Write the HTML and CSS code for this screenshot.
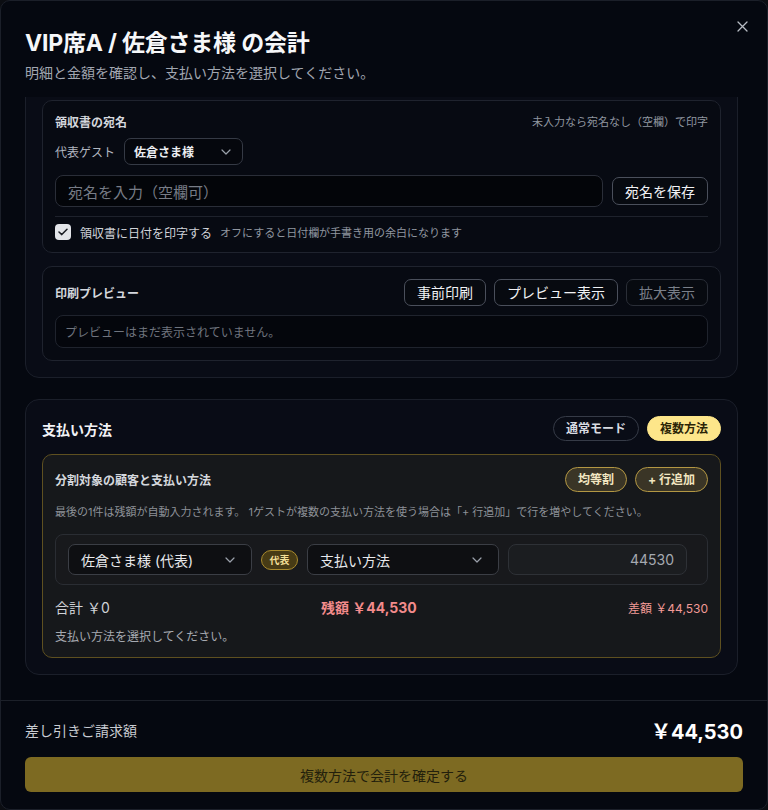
FILE: index.html
```html
<!DOCTYPE html>
<html lang="ja">
<head>
<meta charset="utf-8">
<title>会計</title>
<link rel="stylesheet" href="styles.css">
</head>
<body>
<div class="modal">
  <button class="close" aria-label="閉じる">
    <svg width="11" height="11" viewBox="0 0 11 11"><path d="M1 1L10 10M10 1L1 10" stroke="#b8bcc4" stroke-width="1.3" stroke-linecap="round"/></svg>
  </button>
  <header class="head">
    <h1 class="title">VIP席A / 佐倉さま様 の会計</h1>
    <p class="subtitle">明細と金額を確認し、支払い方法を選択してください。</p>
  </header>

  <div class="scroll">
    <section class="panel panel-top">
      <div class="card">
        <div class="row-between h18">
          <span class="card-title">領収書の宛名</span>
          <span class="note">未入力なら宛名なし（空欄）で印字</span>
        </div>
        <div class="guest-row">
          <span class="label">代表ゲスト</span>
          <div class="select select-sm">
            <span class="select-text bold">佐倉さま様</span>
            <svg class="chev" width="10" height="6" viewBox="0 0 10 6"><path d="M1 1L5 5L9 1" fill="none" stroke="#9aa0aa" stroke-width="1.2" stroke-linecap="round" stroke-linejoin="round"/></svg>
          </div>
        </div>
        <div class="name-row">
          <div class="input name-input"><span class="placeholder">宛名を入力（空欄可）</span></div>
          <button class="btn btn-save">宛名を保存</button>
        </div>
        <div class="divider"></div>
        <div class="check-row">
          <span class="checkbox">
            <svg width="10" height="8" viewBox="0 0 10 8"><path d="M1 4L3.8 6.6L9 1.2" fill="none" stroke="#1b1e24" stroke-width="1.5" stroke-linecap="round" stroke-linejoin="round"/></svg>
          </span>
          <span class="check-label">領収書に日付を印字する</span>
          <span class="note">オフにすると日付欄が手書き用の余白になります</span>
        </div>
      </div>

      <div class="card card-preview">
        <div class="row-between h27">
          <span class="card-title">印刷プレビュー</span>
          <div class="btn-group">
            <button class="btn">事前印刷</button>
            <button class="btn">プレビュー表示</button>
            <button class="btn btn-disabled">拡大表示</button>
          </div>
        </div>
        <div class="preview-box">プレビューはまだ表示されていません。</div>
      </div>
    </section>

    <section class="panel panel-pay">
      <div class="row-between h25">
        <h2 class="pay-title">支払い方法</h2>
        <div class="toggle-group">
          <button class="pill pill-outline">通常モード</button>
          <button class="pill pill-active">複数方法</button>
        </div>
      </div>

      <div class="split-box">
        <div class="row-between h25">
          <span class="card-title">分割対象の顧客と支払い方法</span>
          <div class="toggle-group">
            <button class="pill pill-gold">均等割</button>
            <button class="pill pill-gold">+ 行追加</button>
          </div>
        </div>
        <p class="split-hint">最後の1件は残額が自動入力されます。 1ゲストが複数の支払い方法を使う場合は「+ 行追加」で行を増やしてください。</p>

        <div class="split-row">
          <div class="select select-lg">
            <span class="select-text">佐倉さま様 (代表)</span>
            <svg class="chev" width="10" height="6" viewBox="0 0 10 6"><path d="M1 1L5 5L9 1" fill="none" stroke="#9aa0aa" stroke-width="1.2" stroke-linecap="round" stroke-linejoin="round"/></svg>
          </div>
          <span class="badge">代表</span>
          <div class="select select-lg">
            <span class="select-text">支払い方法</span>
            <svg class="chev" width="10" height="6" viewBox="0 0 10 6"><path d="M1 1L5 5L9 1" fill="none" stroke="#9aa0aa" stroke-width="1.2" stroke-linecap="round" stroke-linejoin="round"/></svg>
          </div>
          <div class="amount-input">44530</div>
        </div>

        <div class="totals">
          <span class="total-sum">合計 ￥0</span>
          <span class="total-remain">残額 ￥44,530</span>
          <span class="total-diff">差額 ￥44,530</span>
        </div>
        <p class="split-msg">支払い方法を選択してください。</p>
      </div>
    </section>
  </div>

  <footer class="foot">
    <div class="foot-row">
      <span class="foot-label">差し引きご請求額</span>
      <span class="foot-amount">￥44,530</span>
    </div>
    <button class="confirm">複数方法で会計を確定する</button>
  </footer>
</div>
</body>
</html>
```

FILE: styles.css
```css
* { box-sizing: border-box; }

html, body {
  margin: 0;
  padding: 0;
  background: #0b0d12;
}

body {
  font-family: Inter, "Noto Sans CJK JP", sans-serif;
  color: #e6e8ec;
}

button {
  font-family: inherit;
  cursor: pointer;
}

.modal {
  position: relative;
  height: 810px;
  width: 768px;
  display: flex;
  flex-direction: column;
  background: #050810;
  border: 1px solid #1b1f29;
  border-radius: 10px;
  overflow: hidden;
}

.close {
  position: absolute;
  top: 18px;
  right: 18px;
  width: 14px;
  height: 14px;
  padding: 0;
  border: none;
  background: transparent;
  display: flex;
  align-items: center;
  justify-content: center;
}

.head {
  padding: 28px 24px 14px;
}

.title {
  margin: 0;
  font-size: 23px;
  line-height: 28px;
  font-weight: 700;
  color: #f6f7f9;
  letter-spacing: -0.2px;
}

.subtitle {
  margin: 6px 0 0;
  font-size: 14px;
  line-height: 20px;
  color: #a1a6b0;
}

.scroll {
  flex: 1;
  overflow: hidden;
  padding: 0 29px 0 24px;
}

.panel {
  border: 1px solid #1b1f2a;
  border-radius: 14px;
  background: #090c16;
  padding: 16px;
}

.panel-top {
  margin-top: -14px;
  padding-top: 16px;
}

.panel-pay {
  margin-top: 21px;
}

.card {
  border: 1px solid #1f232e;
  border-radius: 10px;
  background: #070a12;
  padding: 11px 12px 12px;
}

.card-preview {
  margin-top: 13px;
  padding-top: 12px;
}

.row-between {
  display: flex;
  justify-content: space-between;
  align-items: center;
}

.h18 { height: 18px; }
.h25 { height: 25px; }
.h27 { height: 27px; }

.card-title {
  font-size: 12px;
  font-weight: 700;
  color: #d4d7dd;
}

.note {
  font-size: 11px;
  color: #9096a0;
}

.label {
  font-size: 12px;
  color: #b2b7c0;
}

.guest-row {
  margin-top: 8px;
  display: flex;
  align-items: center;
  gap: 9px;
}

.select {
  display: flex;
  align-items: center;
  justify-content: space-between;
  border: 1px solid #353a45;
  background: #05070d;
}

.select-sm {
  width: 119px;
  height: 27px;
  border-radius: 7px;
  padding: 0 11px 0 9px;
}

.select-text {
  font-size: 12px;
  color: #eceef2;
}

.bold { font-weight: 700; }

.name-row {
  margin-top: 10px;
  display: flex;
  align-items: center;
  gap: 9px;
}

.input {
  height: 32px;
  border: 1px solid #2a2e38;
  border-radius: 8px;
  background: #030509;
  display: flex;
  align-items: center;
  padding: 0 12px;
}

.name-input { flex: 1; }

.placeholder {
  font-size: 15px;
  color: #777c86;
}

.btn {
  height: 27px;
  padding: 0 12px;
  border: 1px solid #4a4f5b;
  border-radius: 7px;
  background: #070a10;
  color: #f1f2f5;
  font-size: 14px;
  line-height: 25px;
  white-space: nowrap;
}

.btn-save {
  width: 96px;
  height: 28px;
}

.btn-disabled {
  border-color: #2a2e37;
  color: #7a7f89;
}

.btn-group {
  display: flex;
  gap: 8px;
}

.btn-group .btn { padding: 0 12px; }

.divider {
  margin-top: 9px;
  height: 1px;
  background: #1e222c;
}

.check-row {
  margin-top: 7px;
  height: 16px;
  display: flex;
  align-items: center;
}

.checkbox {
  width: 16px;
  height: 16px;
  border-radius: 4px;
  background: #e3e5e9;
  display: flex;
  align-items: center;
  justify-content: center;
  margin-right: 9px;
}

.check-label {
  font-size: 12px;
  color: #d0d3d9;
  margin-right: 8px;
}

.preview-box {
  margin-top: 9px;
  height: 33px;
  border: 1px solid #1f232d;
  border-radius: 8px;
  background: #04060c;
  display: flex;
  align-items: center;
  padding: 0 9px;
  font-size: 12px;
  color: #6f747e;
}

.pay-title {
  margin: 0;
  font-size: 14px;
  font-weight: 700;
  color: #f2f3f6;
}

.toggle-group {
  display: flex;
  gap: 8px;
}

.pill {
  height: 25px;
  padding: 0 12px;
  border-radius: 13px;
  font-size: 12px;
  font-weight: 700;
  line-height: 23px;
  white-space: nowrap;
}

.pill-outline {
  border: 1px solid #363b47;
  background: transparent;
  color: #d8dbe1;
}

.pill-active {
  border: 1px solid #fde68a;
  background: #fde68a;
  color: #2b2406;
}

.pill-gold {
  border: 1px solid #b39743;
  background: #3a3526;
  color: #f2e6c0;
}

.split-box {
  margin-top: 13px;
  border: 1px solid #5e5020;
  border-radius: 10px;
  background: #16181b;
  padding: 12px;
}

.split-hint {
  margin: 12px 0 0;
  font-size: 11px;
  line-height: 16px;
  color: #8d9198;
}

.split-row {
  margin-top: 14px;
  border: 1px solid #2a2d33;
  border-radius: 8px;
  background: #18191c;
  padding: 9px 12px;
  display: grid;
  grid-template-columns: 184px 37px 192px 179px;
  align-items: center;
  gap: 9px;
}

.select-lg {
  height: 31px;
  border-radius: 7px;
  border-color: #3b3e45;
  background: #0e0f12;
  padding: 0 16px 0 12px;
}

.select-lg .select-text {
  font-size: 14px;
  color: #e8e9ec;
}

.badge {
  height: 20px;
  border: 1px solid #a88a2d;
  border-radius: 10px;
  background: #473b15;
  color: #f3df97;
  font-size: 10px;
  font-weight: 700;
  display: flex;
  align-items: center;
  justify-content: center;
}

.amount-input {
  height: 31px;
  border: 1px solid #2e3136;
  border-radius: 8px;
  background: #1b1d20;
  font-size: 14px;
  color: #a5a9b0;
  display: flex;
  align-items: center;
  justify-content: flex-end;
  padding: 0 12px;
}

.totals {
  margin-top: 12px;
  height: 20px;
  display: flex;
  justify-content: space-between;
  align-items: center;
}

.total-sum {
  font-size: 14px;
  color: #cfd2d7;
}

.total-remain {
  font-size: 14px;
  font-weight: 700;
  color: #f38b8b;
}

.total-diff {
  font-size: 12px;
  color: #f19a96;
}

.split-msg {
  margin: 11px 0 0;
  font-size: 12px;
  line-height: 17px;
  color: #a6aab1;
}

.foot {
  border-top: 1px solid #1c2029;
  padding: 16px 24px 17px;
}

.foot-row {
  height: 26px;
  display: flex;
  justify-content: space-between;
  align-items: center;
}

.foot-label {
  font-size: 14px;
  color: #c9ccd2;
}

.foot-amount {
  font-size: 20px;
  font-weight: 700;
  color: #ffffff;
}

.confirm {
  margin-top: 14px;
  width: 100%;
  height: 35px;
  border: none;
  border-radius: 6px;
  background: #7d6a22;
  color: #231f0c;
  font-size: 14px;
}
```
